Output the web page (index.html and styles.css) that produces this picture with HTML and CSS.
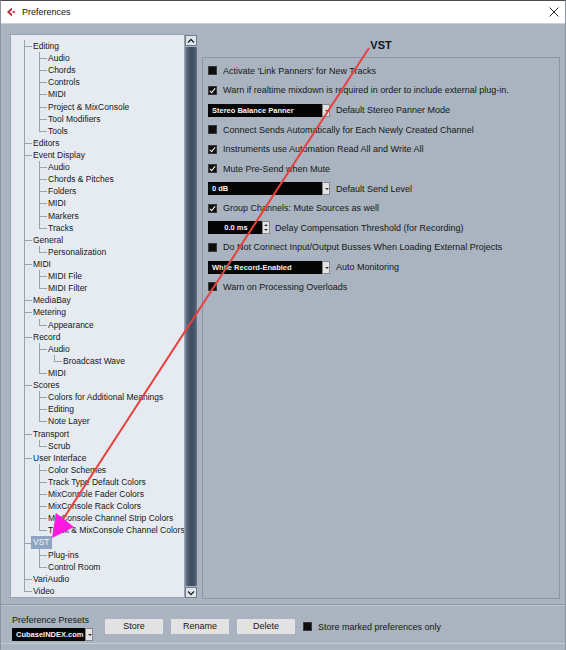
FILE: index.html
```html
<!DOCTYPE html>
<html>
<head>
<meta charset="utf-8">
<link rel="stylesheet" href="styles.css">
</head>
<body>
<div class="window">
  <div class="titlebar">
    <svg class="appicon" width="10" height="10" viewBox="0 0 10 10"><path d="M6 0.5 L1 5 L6 9.5 L6 7 L3.6 5 L6 3 Z" fill="#b3262f"/><circle cx="7.8" cy="5" r="1.3" fill="#d94050"/></svg>
    <span class="title">Preferences</span>
    <svg class="close" width="10" height="10" viewBox="0 0 10 10"><path d="M0.5 0.5 L9.5 9.5 M9.5 0.5 L0.5 9.5" stroke="#222" stroke-width="1"/></svg>
  </div>
  <div class="main">
    <div class="treewrap">
      <div class="tree">
        <div class="row"><i class="t"></i><span>Editing</span></div>
        <div class="row"><i class="v"></i><i class="t"></i><span>Audio</span></div>
        <div class="row"><i class="v"></i><i class="t"></i><span>Chords</span></div>
        <div class="row"><i class="v"></i><i class="t"></i><span>Controls</span></div>
        <div class="row"><i class="v"></i><i class="t"></i><span>MIDI</span></div>
        <div class="row"><i class="v"></i><i class="t"></i><span>Project &amp; MixConsole</span></div>
        <div class="row"><i class="v"></i><i class="t"></i><span>Tool Modifiers</span></div>
        <div class="row"><i class="v"></i><i class="l"></i><span>Tools</span></div>
        <div class="row"><i class="t"></i><span>Editors</span></div>
        <div class="row"><i class="t"></i><span>Event Display</span></div>
        <div class="row"><i class="v"></i><i class="t"></i><span>Audio</span></div>
        <div class="row"><i class="v"></i><i class="t"></i><span>Chords &amp; Pitches</span></div>
        <div class="row"><i class="v"></i><i class="t"></i><span>Folders</span></div>
        <div class="row"><i class="v"></i><i class="t"></i><span>MIDI</span></div>
        <div class="row"><i class="v"></i><i class="t"></i><span>Markers</span></div>
        <div class="row"><i class="v"></i><i class="l"></i><span>Tracks</span></div>
        <div class="row"><i class="t"></i><span>General</span></div>
        <div class="row"><i class="v"></i><i class="l"></i><span>Personalization</span></div>
        <div class="row"><i class="t"></i><span>MIDI</span></div>
        <div class="row"><i class="v"></i><i class="t"></i><span>MIDI File</span></div>
        <div class="row"><i class="v"></i><i class="l"></i><span>MIDI Filter</span></div>
        <div class="row"><i class="t"></i><span>MediaBay</span></div>
        <div class="row"><i class="t"></i><span>Metering</span></div>
        <div class="row"><i class="v"></i><i class="l"></i><span>Appearance</span></div>
        <div class="row"><i class="t"></i><span>Record</span></div>
        <div class="row"><i class="v"></i><i class="t"></i><span>Audio</span></div>
        <div class="row"><i class="v"></i><i class="v"></i><i class="l"></i><span>Broadcast Wave</span></div>
        <div class="row"><i class="v"></i><i class="l"></i><span>MIDI</span></div>
        <div class="row"><i class="t"></i><span>Scores</span></div>
        <div class="row"><i class="v"></i><i class="t"></i><span>Colors for Additional Meanings</span></div>
        <div class="row"><i class="v"></i><i class="t"></i><span>Editing</span></div>
        <div class="row"><i class="v"></i><i class="l"></i><span>Note Layer</span></div>
        <div class="row"><i class="t"></i><span>Transport</span></div>
        <div class="row"><i class="v"></i><i class="l"></i><span>Scrub</span></div>
        <div class="row"><i class="t"></i><span>User Interface</span></div>
        <div class="row"><i class="v"></i><i class="t"></i><span>Color Schemes</span></div>
        <div class="row"><i class="v"></i><i class="t"></i><span>Track Type Default Colors</span></div>
        <div class="row"><i class="v"></i><i class="t"></i><span>MixConsole Fader Colors</span></div>
        <div class="row"><i class="v"></i><i class="t"></i><span>MixConsole Rack Colors</span></div>
        <div class="row"><i class="v"></i><i class="t"></i><span>MixConsole Channel Strip Colors</span></div>
        <div class="row"><i class="v"></i><i class="l"></i><span>Track &amp; MixConsole Channel Colors</span></div>
        <div class="row"><i class="t"></i><span class="sel">VST</span></div>
        <div class="row"><i class="v"></i><i class="t"></i><span>Plug-ins</span></div>
        <div class="row"><i class="v"></i><i class="l"></i><span>Control Room</span></div>
        <div class="row"><i class="t"></i><span>VariAudio</span></div>
        <div class="row"><i class="l"></i><span>Video</span></div>
      </div>
      <div class="scrollbar">
        <div class="sbtn"><svg width="8" height="6" viewBox="0 0 8 6"><path d="M1 4.5 L4 1.5 L7 4.5" fill="none" stroke="#222" stroke-width="1.3"/></svg></div>
        <div class="thumb"></div>
        <div class="sbtn"><svg width="8" height="6" viewBox="0 0 8 6"><path d="M1 1.5 L4 4.5 L7 1.5" fill="none" stroke="#222" stroke-width="1.3"/></svg></div>
      </div>
    </div>
    <div class="right">
      <div class="heading">VST</div>
      <div class="group">
        <div class="opt"><span class="cb"></span><span>Activate 'Link Panners' for New Tracks</span></div>
        <div class="opt"><span class="cb on"></span><span>Warn if realtime mixdown is required in order to include external plug-in.</span></div>
        <div class="opt"><span class="dd"><span class="ddv">Stereo Balance Panner</span><span class="dda"></span></span><span>Default Stereo Panner Mode</span></div>
        <div class="opt"><span class="cb"></span><span>Connect Sends Automatically for Each Newly Created Channel</span></div>
        <div class="opt"><span class="cb on"></span><span>Instruments use Automation Read All and Write All</span></div>
        <div class="opt"><span class="cb on"></span><span>Mute Pre-Send when Mute</span></div>
        <div class="opt"><span class="dd"><span class="ddv">0 dB</span><span class="dda"></span></span><span>Default Send Level</span></div>
        <div class="opt"><span class="cb on"></span><span>Group Channels: Mute Sources as well</span></div>
        <div class="opt"><span class="spin"><span class="spinv">0.0 ms</span><span class="spinb"><span class="up"></span><span class="dn"></span></span></span><span>Delay Compensation Threshold (for Recording)</span></div>
        <div class="opt"><span class="cb"></span><span>Do Not Connect Input/Output Busses When Loading External Projects</span></div>
        <div class="opt"><span class="dd"><span class="ddv">While Record-Enabled</span><span class="dda"></span></span><span>Auto Monitoring</span></div>
        <div class="opt"><span class="cb"></span><span>Warn on Processing Overloads</span></div>
      </div>
    </div>
  </div>
  <div class="bottom">
    <div class="presets">
      <div class="plabel">Preference Presets</div>
      <span class="pdd"><span class="ddv">CubaseINDEX.com</span><span class="dda"></span></span>
    </div>
    <div class="btn">Store</div>
    <div class="btn">Rename</div>
    <div class="btn">Delete</div>
    <div class="opt bopt"><span class="cb"></span><span>Store marked preferences only</span></div>
  </div>
</div>
<svg class="annot" width="566" height="650" viewBox="0 0 566 650">
  <line x1="369" y1="48" x2="58" y2="527" stroke="#e8403e" stroke-width="2"/>
  <polygon points="56,513 74,527 52,538" fill="#ff19e0"/>
</svg>
</body>
</html>
```
FILE: styles.css
```css
* { box-sizing: border-box; }
html, body { margin: 0; padding: 0; }
body {
  width: 566px;
  height: 650px;
  overflow: hidden;
  position: relative;
  font-family: "Liberation Sans", Arial, sans-serif;
  color: #161616;
  background: #a9b4c0;
}
.window {
  width: 566px;
  height: 650px;
  display: flex;
  flex-direction: column;
  border-left: 1px solid #8a949f;
  border-right: 1px solid #8a949f;
  border-top: 1px solid #4a4a4a;
}
.titlebar {
  height: 23px;
  flex: none;
  background: #ffffff;
  display: flex;
  align-items: center;
  padding-left: 5px;
  padding-right: 6px;
  border-bottom: 1px solid #c9d0d8;
}
.appicon { margin-right: 6px; }
.title { font-size: 9px; color: #111; flex: 1; }
.main {
  height: 575px;
  flex: none;
  display: flex;
  padding: 10px 5px 0 9px;
}
.treewrap {
  width: 187px;
  height: 564px;
  display: flex;
  flex: none;
}
.tree {
  width: 175px;
  height: 100%;
  background: #e6ebf1;
  border: 1px solid #98a3af;
  padding: 5px 0 0 6px;
  font-size: 8.5px;
  overflow: hidden;
}
.row {
  height: 12.11px;
  display: flex;
  align-items: center;
  white-space: nowrap;
}
.row i {
  width: 15px;
  height: 100%;
  flex: none;
  position: relative;
}
.row i.v::before, .row i.t::before, .row i.l::before {
  content: "";
  position: absolute;
  left: 7px;
  top: 0;
  bottom: 0;
  border-left: 1px solid #99a3af;
}
.row i.l::before { bottom: 50%; }
.row i.t::after, .row i.l::after {
  content: "";
  position: absolute;
  left: 7px;
  width: 8px;
  top: 50%;
  border-top: 1px solid #99a3af;
}
.row span {
  margin-left: -1px;
  padding: 0 2px;
  line-height: 12px;
}
.row span.sel {
  background: #8ea5c0;
  color: #eef3f9;
  line-height: 13px;
}
.scrollbar {
  width: 12px;
  display: flex;
  flex-direction: column;
  padding-top: 1px;
}
.sbtn {
  height: 11px;
  background: #dfe5ec;
  border: 1px solid #6f7b88;
  display: flex;
  align-items: center;
  justify-content: center;
}
.thumb {
  flex: 1;
  margin: 1px 0;
  background: linear-gradient(to right, #8795a6 0, #56647a 2px, #3f4c60 6px, #4a586c 10px, #6b788a 12px);
  border-radius: 1px;
}
.right {
  flex: 1;
  display: flex;
  flex-direction: column;
  padding-left: 5px;
}
.heading {
  height: 23px;
  flex: none;
  font-weight: bold;
  font-size: 11px;
  text-align: center;
  line-height: 22px;
}
.group {
  flex: 1;
  border: 1px solid #8b96a2;
  padding: 3px 0 0 5px;
}
.opt {
  height: 19.64px;
  display: flex;
  align-items: center;
  font-size: 9px;
  white-space: nowrap;
}
.cb {
  width: 9px;
  height: 9px;
  background: #0e0e0e;
  border: 1px solid #3a3a3a;
  margin-right: 6px;
  flex: none;
  position: relative;
}
.cb.on::after {
  content: "";
  position: absolute;
  left: 2px;
  top: 0px;
  width: 2px;
  height: 5px;
  border-right: 1.5px solid #fff;
  border-bottom: 1.5px solid #fff;
  transform: rotate(40deg);
}
.dd, .pdd, .spin {
  display: flex;
  height: 13px;
  flex: none;
  margin-right: 6px;
}
.ddv, .spinv {
  background: #050505;
  color: #f4f4f4;
  font-weight: bold;
  font-size: 7.5px;
  line-height: 13px;
  padding-left: 4px;
}
.dd .ddv { width: 114px; }
.dda {
  width: 8px;
  background: #e4e4e4;
  border: 1px solid #888;
  position: relative;
}
.dda::after {
  content: "";
  position: absolute;
  left: 1.5px;
  top: 5px;
  border-left: 2px solid transparent;
  border-right: 2px solid transparent;
  border-top: 2px solid #333;
}
.spin { margin-right: 5px; }
.spinv {
  width: 54px;
  text-align: center;
  padding-left: 2px;
}
.spinb {
  width: 8px;
  display: flex;
  flex-direction: column;
  background: #e4e4e4;
  border: 1px solid #888;
}
.spinb span { flex: 1; position: relative; }
.spinb .up::after, .spinb .dn::after {
  content: "";
  position: absolute;
  left: 1px;
  border-left: 2px solid transparent;
  border-right: 2px solid transparent;
}
.spinb .up::after { top: 2px; border-bottom: 2px solid #333; }
.spinb .dn::after { top: 1px; border-top: 2px solid #333; }
.bottom {
  flex: 1;
  display: flex;
  align-items: flex-start;
  margin-top: 5px;
  border-top: 1px solid #8d98a4;
  box-shadow: inset 0 1px 0 #bcc6d0;
  border-bottom: 1px solid #c4ccd5;
  margin-bottom: 6px;
  padding: 9px 0 0 11px;
}
.presets { display: flex; flex-direction: column; margin-right: 12px; }
.plabel { font-size: 9px; line-height: 12px; margin-bottom: 2px; }
.pdd { margin-right: 0; }
.pdd .ddv { width: 73px; font-size: 7.5px; padding-left: 4px; }
.btn {
  width: 58px;
  height: 15px;
  margin-top: 5px;
  margin-right: 8px;
  background: #e2e2e2;
  font-size: 9px;
  line-height: 15px;
  text-align: center;
}
.bopt { height: 15px; margin-top: 5px; }
.annot { position: absolute; left: 0; top: 0; pointer-events: none; }
```
